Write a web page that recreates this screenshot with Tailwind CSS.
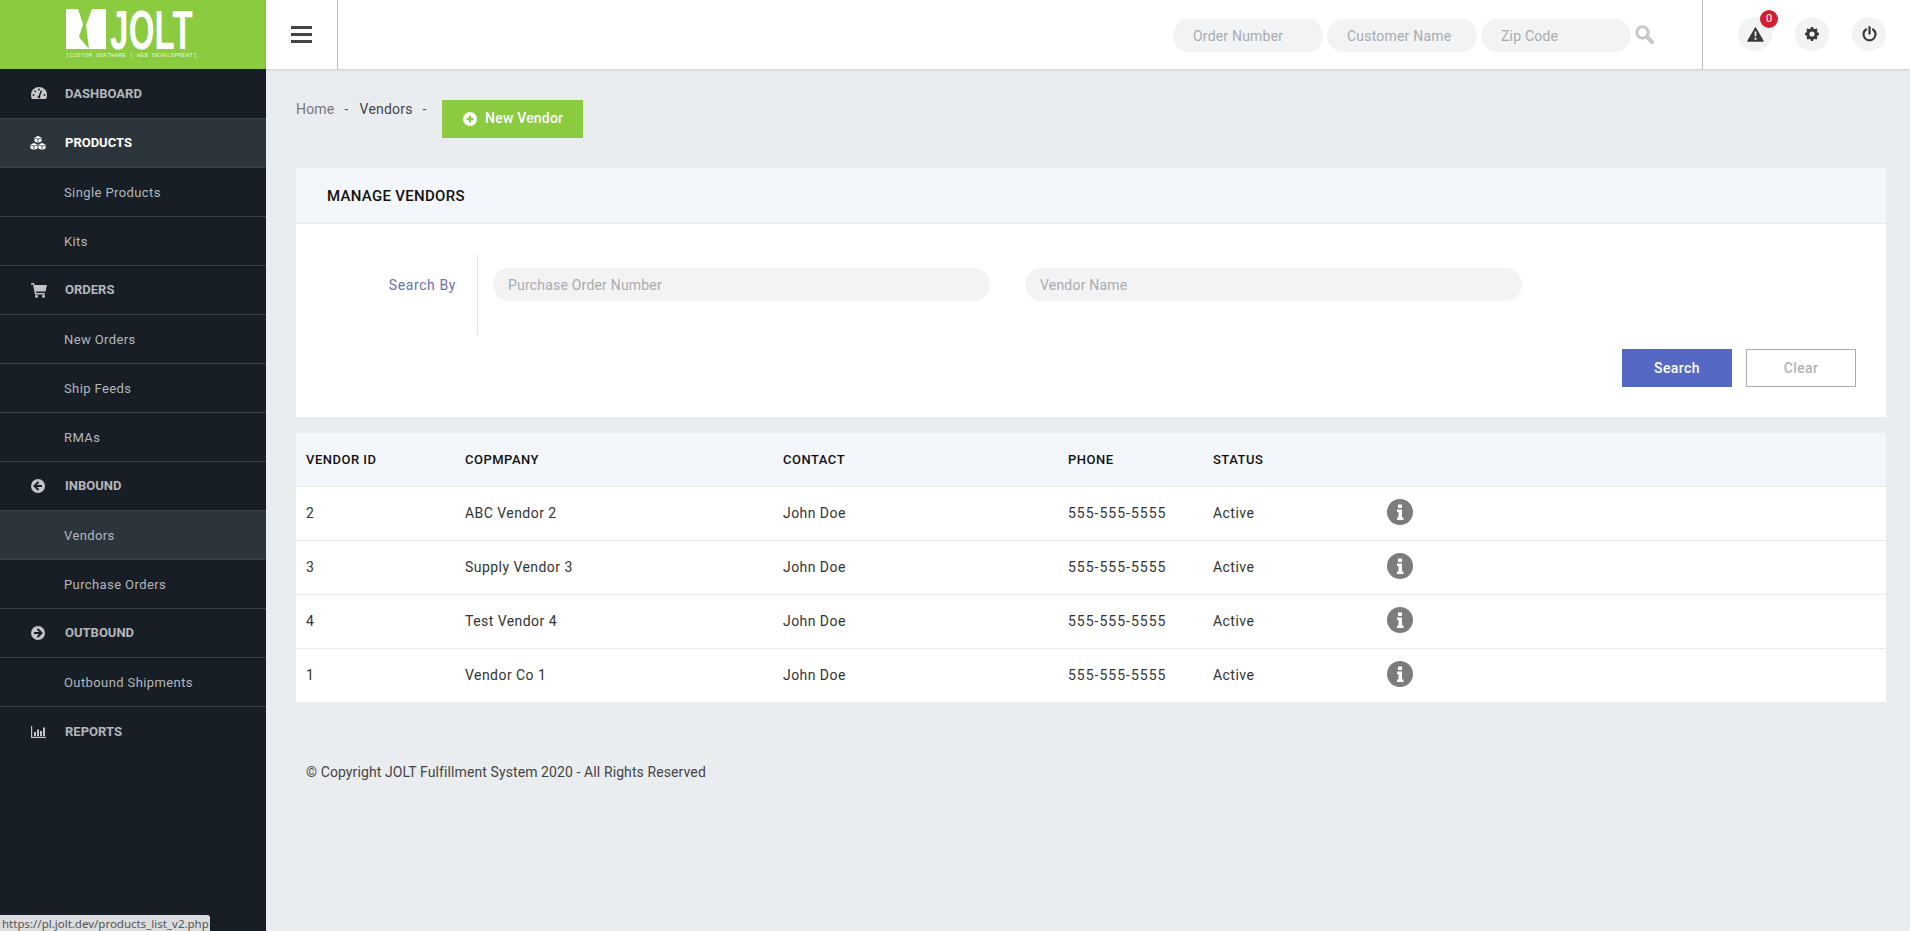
<!DOCTYPE html>
<html lang="en">
  <head>
    <meta charset="UTF-8" />
    <title>Manage Vendors</title>
    <script src="https://cdn.jsdelivr.net/npm/@tailwindcss/browser@4"></script>
  </head>
  <body class="bg-[#eaedf0] text-[#333] font-['Roboto',sans-serif] overflow-hidden">
    <div class="flex h-[931px] relative">
      <!-- Sidebar -->
      <aside class="w-[266px] shrink-0 bg-[#171e25] text-[#b4b7ba] text-[13px] tracking-[0.4px]">
        <div class="h-[69px] bg-[#8acb3f] pl-[66px] pt-[8px]">
          <svg width="134" height="60" viewBox="0 0 134 60">
            <path fill="#fff" fill-rule="evenodd" d="M0 1H40V41H0Z M12 1L26 1L20 17L23 41L13 29L17 16Z" />
            <text x="44" y="41" font-family="Liberation Sans" font-weight="700" font-size="55" fill="#fff" textLength="83" lengthAdjust="spacingAndGlyphs">JOLT</text>
            <text x="0" y="49" font-family="Liberation Mono" font-size="6" fill="#e9f6d8" textLength="131" lengthAdjust="spacingAndGlyphs">[CUSTOM SOFTWARE | WEB DEVELOPMENT]</text>
          </svg>
        </div>
        <nav class="pt-[1px]">
          <a class="h-[49px] flex items-center border-b border-[#3a4147] font-bold tracking-normal">
            <svg class="w-[16px] h-[14px] ml-[31px] mr-[18px]" viewBox="0 0 16 14" fill="#c8c8c8"><path d="M8 0a8 8 0 0 0-8 8c0 1.500.4 3 1 4h14c.6-1 1-2.500 1-4a8 8 0 0 0-8-8Z" /><path d="M8 10 10.500 3.500" stroke="#171e25" stroke-width="1.400" fill="none" /><circle cx="8" cy="2.500" r=".9" fill="#171e25" /><circle cx="2.500" cy="8" r=".9" fill="#171e25" /><circle cx="13.500" cy="8" r=".9" fill="#171e25" /><circle cx="4.200" cy="4.300" r=".9" fill="#171e25" /><circle cx="8" cy="10" r="1.300" fill="#171e25" /></svg>
            DASHBOARD
          </a>
          <a class="h-[49px] flex items-center border-b border-[#3a4147] font-bold tracking-normal bg-[#2b353b] text-white">
            <svg class="w-[16px] h-[14px] ml-[30px] mr-[19px]" viewBox="0 0 16 14"><g fill="#fff"><path d="M8 0 11.500 1.500V5.500L8 7 4.500 5.500V1.500Z" /><path d="M4 7 7.500 8.500V12.500L4 14 .5 12.500V8.500Z" /><path d="M12 7 15.500 8.500V12.500L12 14 8.500 12.500V8.500Z" /></g><path d="M4.500 1.800 8 3.200 11.500 1.800M8 3.200V7M.5 8.800 4 10.200 7.500 8.800M4 10.200V14M8.500 8.800 12 10.200 15.500 8.800M12 10.200V14" stroke="#2b353b" stroke-width=".8" fill="none" /></svg>
            PRODUCTS
          </a>
          <a class="h-[49px] flex items-center border-b border-[#3a4147] pl-[64px] pt-[2px]">Single Products</a>
          <a class="h-[49px] flex items-center border-b border-[#3a4147] pl-[64px] pt-[2px]">Kits</a>
          <a class="h-[49px] flex items-center border-b border-[#3a4147] font-bold tracking-normal">
            <svg class="w-[16px] h-[16px] ml-[31px] mr-[18px]" viewBox="0 0 16 16" fill="#c2c4c6"><path d="M0 1H3L3.500 3H16L14.500 9.500H5L5.300 11H14V12.500H4L2 2.500H0Z" /><circle cx="5.500" cy="14.300" r="1.500" /><circle cx="12.500" cy="14.300" r="1.500" /></svg>
            ORDERS
          </a>
          <a class="h-[49px] flex items-center border-b border-[#3a4147] pl-[64px] pt-[2px]">New Orders</a>
          <a class="h-[49px] flex items-center border-b border-[#3a4147] pl-[64px] pt-[2px]">Ship Feeds</a>
          <a class="h-[49px] flex items-center border-b border-[#3a4147] pl-[64px] pt-[2px]">RMAs</a>
          <a class="h-[49px] flex items-center border-b border-[#3a4147] font-bold tracking-normal">
            <svg class="w-[14px] h-[14px] ml-[31px] mr-[20px]" viewBox="0 0 14 14"><circle cx="7" cy="7" r="7" fill="#c2c4c6" /><path d="M7.500 3 3.500 7l4 4M4 7h7" stroke="#171e25" stroke-width="2" fill="none" /></svg>
            INBOUND
          </a>
          <a class="h-[49px] flex items-center border-b border-[#3a4147] pl-[64px] pt-[2px] bg-[#2b353b]">Vendors</a>
          <a class="h-[49px] flex items-center border-b border-[#3a4147] pl-[64px] pt-[2px]">Purchase Orders</a>
          <a class="h-[49px] flex items-center border-b border-[#3a4147] font-bold tracking-normal">
            <svg class="w-[14px] h-[14px] ml-[31px] mr-[20px]" viewBox="0 0 14 14"><circle cx="7" cy="7" r="7" fill="#c2c4c6" /><path d="M6.500 3 10.500 7l-4 4M10 7H3" stroke="#171e25" stroke-width="2" fill="none" /></svg>
            OUTBOUND
          </a>
          <a class="h-[49px] flex items-center border-b border-[#3a4147] pl-[64px] pt-[2px]">Outbound Shipments</a>
          <a class="h-[49px] flex items-center font-bold tracking-normal">
            <svg class="w-[15px] h-[12px] ml-[31px] mr-[19px]" viewBox="0 0 15 12" fill="#c2c4c6"><path d="M0 0H1.200V10.800H15V12H0Z" /><path d="M3 6H5V10H3Z M6 3.500H8V10H6Z M9 5H11V10H9Z M12 1.500H14V10H12Z" /></svg>
            REPORTS
          </a>
        </nav>
      </aside>

      <!-- Main -->
      <div class="flex-1 min-w-0">
        <header class="h-[69px] bg-white shadow-[0_1px_2px_rgba(0,0,0,0.12)] flex items-stretch">
          <div class="w-[72px] border-r border-[#b9b9b9] flex items-center pl-[25px]">
            <div class="w-[21px] flex flex-col gap-[4px]">
              <span class="h-[3px] bg-[#444]"></span>
              <span class="h-[3px] bg-[#444]"></span>
              <span class="h-[3px] bg-[#444]"></span>
            </div>
          </div>
          <div class="flex-1 flex items-center justify-end gap-[4px] pr-[48px] pt-[2px] text-[14px]">
            <input class="w-[150px] h-[33px] rounded-full bg-[#f1f3f5] pl-[20px] tracking-[0.2px] placeholder:text-[#a9acaf]" placeholder="Order Number" />
            <input class="w-[150px] h-[33px] rounded-full bg-[#f1f3f5] pl-[20px] tracking-[0.2px] placeholder:text-[#a9acaf]" placeholder="Customer Name" />
            <input class="w-[150px] h-[33px] rounded-full bg-[#f1f3f5] pl-[20px] tracking-[0.2px] placeholder:text-[#a9acaf]" placeholder="Zip Code" />
            <svg class="w-[19px] h-[19px] mb-[2px]" viewBox="0 0 19 19" fill="none" stroke="#c8c8c8"><circle cx="7.500" cy="7.500" r="5.700" stroke-width="3" /><path d="M12 12l5 5" stroke-width="4" stroke-linecap="round" /></svg>
          </div>
          <div class="w-[208px] border-l border-[#b9b9b9] flex items-center pl-[35px] gap-[23px] pb-[1px]">
            <div class="relative w-[34px] h-[34px] rounded-full bg-[#f1f3f5] flex items-center justify-center">
              <svg class="w-[17px] h-[15px]" viewBox="0 0 17 15"><path d="M8.500 1 16 14H1Z" fill="#3a3a3a" stroke="#3a3a3a" stroke-width="1.500" stroke-linejoin="round" /><path d="M7.500 4.500h2l-.3 5h-1.400ZM7.500 10.800h2v2h-2Z" fill="#f1f3f5" /></svg>
              <span class="absolute top-[-7px] right-[-6px] w-[18px] h-[18px] rounded-full bg-[#d3202f] text-white text-[11px] flex items-center justify-center">0</span>
            </div>
            <div class="w-[34px] h-[34px] rounded-full bg-[#f1f3f5] flex items-center justify-center">
              <svg class="w-[14px] h-[14px]" viewBox="0 0 14 14"><circle cx="7" cy="7" r="4.200" fill="none" stroke="#3a3a3a" stroke-width="3.200" /><path d="M7 0v14M0 7h14M2 2l10 10M12 2 2 12" stroke="#3a3a3a" stroke-width="2.400" stroke-dasharray="3 8 3" /></svg>
            </div>
            <div class="w-[34px] h-[34px] rounded-full bg-[#f1f3f5] flex items-center justify-center">
              <svg class="w-[15px] h-[16px]" viewBox="0 0 15 16" fill="none" stroke="#3a3a3a" stroke-width="2.200" stroke-linecap="round"><path d="M4 3.500a6 6 0 1 0 7 0" /><path d="M7.500 1.200v6.500" /></svg>
            </div>
          </div>
        </header>

        <main class="pl-[30px] pr-[24px] pt-[31px]">
          <div class="flex items-start h-[38px] text-[14px] tracking-[0.2px]">
            <span class="text-[#777] -mt-[1px]">Home</span>
            <span class="text-[#555] -mt-[1px] ml-[10px]">-</span>
            <span class="text-[#444] -mt-[1px] ml-[11px]">Vendors</span>
            <span class="text-[#555] -mt-[1px] ml-[10px]">-</span>
            <a class="ml-[15px] w-[141px] h-[38px] pb-[1px] pl-[2px] bg-[#8acb3f] text-white font-medium flex items-center justify-center gap-[8px]">
              <svg class="w-[14px] h-[14px]" viewBox="0 0 14 14"><circle cx="7" cy="7" r="7" fill="#fff" /><path d="M7 3.500v7M3.500 7h7" stroke="#8acb3f" stroke-width="2" /></svg>
              New Vendor
            </a>
          </div>

          <section class="mt-[30px] bg-white">
            <div class="h-[56px] pt-[2px] bg-[#f3f6fb] border-b border-[#e6e9ee] flex items-center pl-[31px] text-[15px] font-medium text-[#111] tracking-[0.3px]">MANAGE VENDORS</div>
            <div class="pt-[31px] pb-[30px] pr-[30px] text-[14px] tracking-[0.2px]">
              <div class="flex">
                <div class="w-[160px] text-right text-[#6a6fb0] pt-[20px] tracking-[0.6px]">Search By</div>
                <div class="ml-[21px] h-[80px] border-l border-[#e3e3e3] pl-[15px] pt-[13px] flex gap-[35px] items-start">
                  <input class="w-[497px] h-[33px] rounded-full bg-[#f1f3f5] pl-[15px] placeholder:text-[#a9acaf]" placeholder="Purchase Order Number" />
                  <input class="w-[497px] h-[33px] rounded-full bg-[#f1f3f5] pl-[15px] placeholder:text-[#a9acaf]" placeholder="Vendor Name" />
                </div>
              </div>
              <div class="flex justify-end gap-[14px] mt-[14px] font-medium tracking-[0.4px]">
                <button class="w-[110px] h-[38px] bg-[#5568c4] text-white">Search</button>
                <button class="w-[110px] h-[38px] border border-[#aaa] text-[#b3b3b3]">Clear</button>
              </div>
            </div>
          </section>

          <table class="mt-[16px] w-full table-fixed bg-white text-[14px] tracking-[0.45px] text-[#333]">
            <colgroup>
              <col class="w-[169px]" />
              <col class="w-[318px]" />
              <col class="w-[285px]" />
              <col class="w-[145px]" />
              <col class="w-[174px]" />
              <col />
            </colgroup>
            <thead class="bg-[#f3f6fb] text-[#111] text-left text-[13px] tracking-[0.5px]">
              <tr class="h-[53px] border-b border-[#e6e9ee]">
                <th class="pl-[10px] font-medium">VENDOR ID</th>
                <th class="font-medium">COPMPANY</th>
                <th class="font-medium">CONTACT</th>
                <th class="font-medium">PHONE</th>
                <th class="font-medium">STATUS</th>
                <th></th>
              </tr>
            </thead>
            <tbody>
              <tr class="h-[54px] border-b border-[#e6e9ee]">
                <td class="pl-[10px]">2</td><td>ABC Vendor 2</td><td>John Doe</td><td class="tracking-[1px]">555-555-5555</td><td>Active</td>
                <td><svg class="w-[26px] h-[26px] -mt-[2px]" viewBox="0 0 26 26"><circle cx="13" cy="13" r="13" fill="#7d7b7b" /><path d="M11 5.500h4v3.500h-4ZM10 10.500h5v8h1.500v2.500h-6.500v-2.500h1.500v-5.500h-1.500Z" fill="#fff" /></svg></td>
              </tr>
              <tr class="h-[54px] border-b border-[#e6e9ee]">
                <td class="pl-[10px]">3</td><td>Supply Vendor 3</td><td>John Doe</td><td class="tracking-[1px]">555-555-5555</td><td>Active</td>
                <td><svg class="w-[26px] h-[26px] -mt-[2px]" viewBox="0 0 26 26"><circle cx="13" cy="13" r="13" fill="#7d7b7b" /><path d="M11 5.500h4v3.500h-4ZM10 10.500h5v8h1.500v2.500h-6.500v-2.500h1.500v-5.500h-1.500Z" fill="#fff" /></svg></td>
              </tr>
              <tr class="h-[54px] border-b border-[#e6e9ee]">
                <td class="pl-[10px]">4</td><td>Test Vendor 4</td><td>John Doe</td><td class="tracking-[1px]">555-555-5555</td><td>Active</td>
                <td><svg class="w-[26px] h-[26px] -mt-[2px]" viewBox="0 0 26 26"><circle cx="13" cy="13" r="13" fill="#7d7b7b" /><path d="M11 5.500h4v3.500h-4ZM10 10.500h5v8h1.500v2.500h-6.500v-2.500h1.500v-5.500h-1.500Z" fill="#fff" /></svg></td>
              </tr>
              <tr class="h-[54px]">
                <td class="pl-[10px]">1</td><td>Vendor Co 1</td><td>John Doe</td><td class="tracking-[1px]">555-555-5555</td><td>Active</td>
                <td><svg class="w-[26px] h-[26px] -mt-[2px]" viewBox="0 0 26 26"><circle cx="13" cy="13" r="13" fill="#7d7b7b" /><path d="M11 5.500h4v3.500h-4ZM10 10.500h5v8h1.500v2.500h-6.500v-2.500h1.500v-5.500h-1.500Z" fill="#fff" /></svg></td>
              </tr>
            </tbody>
          </table>

          <footer class="mt-[60px] pl-[10px] text-[14px] tracking-[0.1px] text-[#444]">© Copyright JOLT Fulfillment System 2020 - All Rights Reserved</footer>
        </main>
      </div>

      <!-- Browser link preview -->
      <div class="absolute left-0 bottom-0 w-[210px] h-[16px] bg-[#dcddde] rounded-tr-[3px] pl-[2px] text-[11.5px] leading-[17px] text-[#555] font-['Noto_Sans',sans-serif] overflow-hidden whitespace-nowrap">https://pl.jolt.dev/products_list_v2.php</div>
    </div>
  </body>
</html>
